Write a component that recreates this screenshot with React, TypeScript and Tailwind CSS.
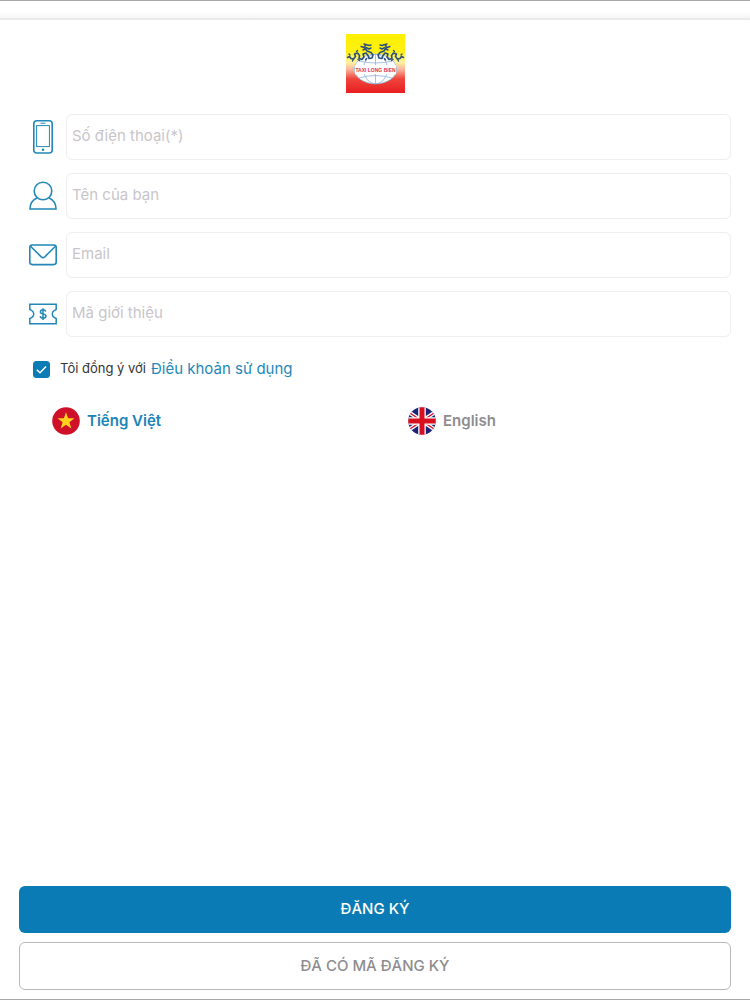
import React, { useState } from "react";

const fieldClass =
  "h-[46px] min-w-0 flex-1 rounded-[6px] border border-[#efedef] bg-white px-[5px] pb-[3px] text-[15px] text-[#333333] outline-none placeholder:text-[#c9c5ca]";

const iconProps = {
  fill: "none",
  stroke: "#2388b8",
  strokeWidth: 1.6,
  "aria-hidden": true,
} as const;

const PhoneIcon = () => (
  <svg width="20" height="34" viewBox="0 0 20 34" {...iconProps}>
    <rect x="0.8" y="0.8" width="18.4" height="32.2" rx="3" />
    <rect x="3.6" y="5.6" width="12.8" height="21" strokeWidth="1" />
    <path d="M7.5 3.2h5" strokeWidth="1" />
    <circle cx="10" cy="29.8" r="1.3" fill="#2388b8" stroke="none" />
  </svg>
);

const UserIcon = () => (
  <svg width="28" height="30" viewBox="0 0 28 30" {...iconProps}>
    <circle cx="14" cy="10" r="8.8" />
    <path d="M8.3 16.7C4 18.6 1 22.5 1 28h26c0-5.500-3-9.400-7.300-11.300" />
  </svg>
);

const MailIcon = () => (
  <svg width="28" height="22" viewBox="0 0 28 22" {...iconProps}>
    <rect x="0.8" y="1" width="26.4" height="19.600" rx="2.500" />
    <path d="M1.500 2.200l10.700 10.600q1.800 1.600 3.600 0L26.500 2.200" />
  </svg>
);

const VoucherIcon = () => (
  <svg width="28" height="22" viewBox="0 0 28 22" {...iconProps}>
    <path
      d="M.8 1.200h26.400v5.300l-1.700.9a4 4 0 0 0 0 7.200l1.700.9v5.300H.8v-5.300l1.700-.9a4 4 0 0 0 0-7.200L.8 6.500z"
      strokeWidth="1.500"
    />
    <path
      d="M16.700 8.600c-.3-1.200-1.300-1.800-2.600-1.800-1.600 0-2.700.8-2.700 2.100 0 2.900 5.500 1.300 5.500 4.200 0 1.400-1.200 2.200-2.800 2.200s-2.700-.8-2.900-2.100M14 5.200v11.700"
      strokeWidth="1.500"
    />
  </svg>
);

const Dragon = () => (
  <g fill="none" stroke="#2b4f7d" strokeLinecap="round" strokeLinejoin="round">
    <path
      d="M1.500 23.500l2-1 1.500 2 2.500.5 2-2.500-1-2.500 3-1 2 2.500-.5 3 3 1 2-2.500-1-3 3-1 2 2.500 1 3 3-.5 1-3-2-2.500-4-1.500-2-3"
      strokeWidth="1.600"
    />
    <path
      d="M15 12.500l3 1 2-3 3 1 2-.5M18 10l2 .5M20 13.500l3 1.500 2-1M17 16l2-1M4 21l-1-1M6.500 27l1-2M13.500 26.500l-1.500-1M20.500 24.500l-1 1.500M10.500 17.500l1-1"
      strokeWidth="1.400"
    />
  </g>
);

const Logo = () => (
  <svg width="59" height="59" viewBox="0 0 59 59" role="img" aria-label="Taxi Long Bien">
    <defs>
      <linearGradient id="logo-bg" x1="0" y1="0" x2="0" y2="1">
        <stop offset="0" stopColor="#fff000" />
        <stop offset="0.3" stopColor="#fff014" />
        <stop offset="0.48" stopColor="#fdf2a0" />
        <stop offset="0.6" stopColor="#f9b59c" />
        <stop offset="0.76" stopColor="#ef453b" />
        <stop offset="1" stopColor="#e91d22" />
      </linearGradient>
    </defs>
    <rect width="59" height="59" fill="url(#logo-bg)" />
    <ellipse cx="29.500" cy="35" rx="21.500" ry="15" fill="#ffffff" />
    <g fill="none" stroke="#8fb3d6" strokeWidth="0.8">
      <ellipse cx="29.500" cy="35" rx="21" ry="14.800" />
      <ellipse cx="29.500" cy="35" rx="12" ry="14.800" />
      <path d="M29.500 20v30M13 27q16.500 4 33 0M13 44q16.500-5 33 0" />
    </g>
    <rect x="9" y="31" width="41" height="9" fill="#ffffff" />
    <Dragon />
    <g transform="translate(59 0) scale(-1 1)">
      <Dragon />
    </g>
    <text
      x="29.500"
      y="37.500"
      textAnchor="middle"
      fontFamily="Liberation Sans Narrow, Liberation Sans, sans-serif"
      fontSize="5"
      fontWeight="700"
      fill="#e2333a"
    >
      TAXI LONG BIEN
    </text>
  </svg>
);

const VietnamFlag = () => (
  <svg width="28" height="28" viewBox="0 0 28 28" aria-hidden="true">
    <circle cx="14" cy="14" r="13.800" fill="#ce1128" />
    <path
      d="M14 5.300l2.100 6h6.400l-5.100 3.900 1.900 6.200L14 17.700l-5.300 3.700 1.900-6.200-5.100-3.900h6.400z"
      fill="#ffd21c"
    />
  </svg>
);

const UkFlag = () => (
  <svg width="28" height="28" viewBox="0 0 28 28" aria-hidden="true">
    <clipPath id="uk-circle">
      <circle cx="14" cy="14" r="13.800" />
    </clipPath>
    <g clipPath="url(#uk-circle)">
      <rect width="28" height="28" fill="#1c2379" />
      <path d="M-4 2l36 24M32 2L-4 26" stroke="#ffffff" strokeWidth="4" />
      <path d="M-4 2l36 24M32 2L-4 26" stroke="#d80f1e" strokeWidth="1.200" />
      <path d="M14 0v28M0 14h28" stroke="#ffffff" strokeWidth="7.600" />
      <path d="M14 0v28M0 14h28" stroke="#d80f1e" strokeWidth="5" />
    </g>
  </svg>
);

const fields = [
  { id: "phone", type: "tel", label: "Số điện thoại(*)", Icon: PhoneIcon },
  { id: "name", type: "text", label: "Tên của bạn", Icon: UserIcon },
  { id: "email", type: "email", label: "Email", Icon: MailIcon },
  { id: "referral", type: "text", label: "Mã giới thiệu", Icon: VoucherIcon },
];

const languages = [
  { code: "vi", name: "Tiếng Việt", Flag: VietnamFlag },
  { code: "en", name: "English", Flag: UkFlag },
];

const App = () => {
  const [agreed, setAgreed] = useState(true);
  const [language, setLanguage] = useState("vi");

  return (
    <div className="flex min-h-screen flex-col border-y border-[#a8a8a8] bg-white font-['Inter','Liberation_Sans',sans-serif]">
      <header className="h-[19px] shrink-0 border-b-2 border-[#ebe9eb] bg-linear-to-b from-white from-60% to-[#f7f6f7]" />
      <form
        className="flex flex-1 flex-col px-[19px] pt-[14px] pb-[9px]"
        onSubmit={(e) => e.preventDefault()}
      >
        <div className="flex justify-center">
          <Logo />
        </div>

        <div className="mt-[21px] flex flex-col gap-[13px]">
          {fields.map(({ id, type, label, Icon }) => (
            <div key={id} className="flex items-center">
              <label
                htmlFor={id}
                aria-label={label}
                className="flex w-[47px] shrink-0 justify-center"
              >
                <Icon />
              </label>
              <input id={id} type={type} placeholder={label} className={fieldClass} />
            </div>
          ))}
        </div>

        <div className="mt-5 flex h-6 items-center pl-[14px]">
          <span className="relative flex">
            <input
              id="terms"
              type="checkbox"
              checked={agreed}
              onChange={(e) => setAgreed(e.target.checked)}
              className="size-[17px] appearance-none rounded-[3px] border border-[#0b7bb5] checked:bg-[#0b7bb5]"
            />
            {agreed && (
              <svg
                viewBox="0 0 17 17"
                className="pointer-events-none absolute inset-0 size-[17px]"
                fill="none"
                stroke="#ffffff"
                strokeWidth="1.500"
                aria-hidden="true"
              >
                <path d="M3.800 8.700l3.200 3 6-6.200" />
              </svg>
            )}
          </span>
          <label htmlFor="terms" className="ml-[10px] text-[13px] text-[#333333]">
            Tôi đồng ý với
          </label>
          <a href="#terms" className="ml-[5px] text-[15px] text-[#2388b8]">
            Điều khoản sử dụng
          </a>
        </div>

        <div className="mt-[26px] grid grid-cols-2">
          {languages.map(({ code, name, Flag }) => (
            <button
              key={code}
              type="button"
              aria-pressed={language === code}
              onClick={() => setLanguage(code)}
              className={`flex items-center gap-[7px] pl-[33px] text-[15px] font-semibold ${
                language === code ? "text-[#1b84b6]" : "text-[#8e8c8f]"
              }`}
            >
              <Flag />
              {name}
            </button>
          ))}
        </div>

        <div className="mt-auto flex flex-col gap-[9px]">
          <button
            type="submit"
            className="h-[47px] rounded-[6px] bg-[#0b7bb5] text-[15px] font-medium text-white"
          >
            ĐĂNG KÝ
          </button>
          <button
            type="button"
            className="h-12 rounded-[6px] border border-[#b9b7ba] bg-white text-[15px] font-medium text-[#8e8c8f]"
          >
            ĐÃ CÓ MÃ ĐĂNG KÝ
          </button>
        </div>
      </form>
    </div>
  );
};

export default App;
